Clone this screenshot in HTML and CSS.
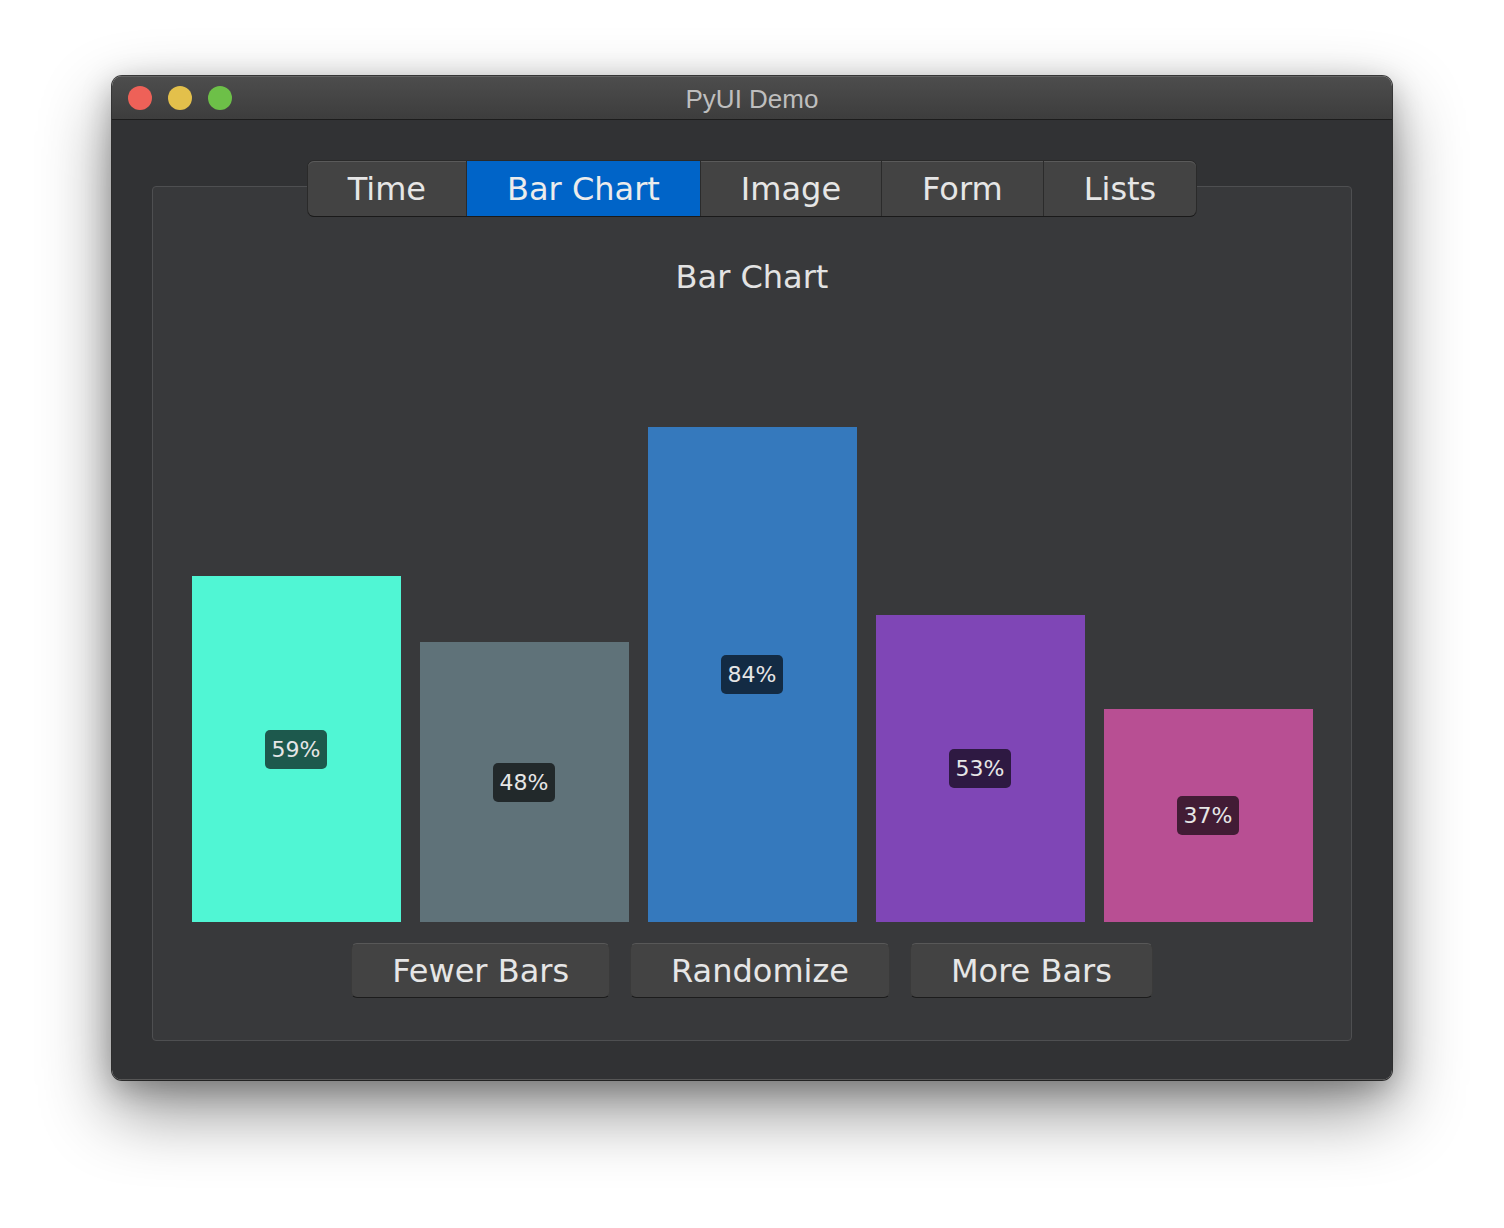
FILE: index.html
```html
<!DOCTYPE html>
<html>
<head>
<meta charset="utf-8">
<title>PyUI Demo</title>
<link rel="stylesheet" href="styles.css">
</head>
<body>
<div class="window">
  <div class="titlebar">
    <div class="lights">
      <span class="light red"></span>
      <span class="light yellow"></span>
      <span class="light green"></span>
    </div>
    <div class="title">PyUI Demo</div>
  </div>
  <div class="content">
    <div class="tabbar">
      <div class="tab">Time</div>
      <div class="tab active">Bar Chart</div>
      <div class="tab">Image</div>
      <div class="tab">Form</div>
      <div class="tab">Lists</div>
    </div>
    <div class="panel">
      <div class="heading">Bar Chart</div>
      <div class="chart">
        <div class="bar b1" style="height:346px"><span class="label">59%</span></div>
        <div class="bar b2" style="height:280px"><span class="label">48%</span></div>
        <div class="bar b3" style="height:495px"><span class="label">84%</span></div>
        <div class="bar b4" style="height:307px"><span class="label">53%</span></div>
        <div class="bar b5" style="height:213px"><span class="label">37%</span></div>
      </div>
      <div class="buttons">
        <div class="btn">Fewer Bars</div>
        <div class="btn">Randomize</div>
        <div class="btn">More Bars</div>
      </div>
    </div>
  </div>
</div>
</body>
</html>
```
FILE: styles.css
```css
html, body {
  margin: 0;
  padding: 0;
  background: #ffffff;
}
body {
  width: 1504px;
  height: 1228px;
  overflow: hidden;
}
.window {
  margin: 76px 0 0 112px;
  width: 1280px;
  height: 1004px;
  border-radius: 10px;
  overflow: hidden;
  box-shadow: 0 0 0 1px rgba(0,0,0,0.75), 0 30px 70px rgba(0,0,0,0.45), 0 8px 30px rgba(0,0,0,0.25);
  display: flex;
  flex-direction: column;
}
.titlebar {
  height: 43px;
  border-bottom: 1px solid #1c1c1c;
  background: linear-gradient(#4d4d4d, #3d3d3d);
  box-shadow: inset 0 1px 0 #646464;
  position: relative;
  display: flex;
  align-items: center;
}
.lights {
  display: flex;
  gap: 16px;
  padding-left: 16px;
  padding-top: 1px;
}
.light {
  width: 24px;
  height: 24px;
  border-radius: 50%;
  display: block;
}
.red { background: #ee6158; }
.yellow { background: #e3c04b; }
.green { background: #6dc048; }
.title {
  position: absolute;
  left: 0;
  right: 0;
  top: 0;
  line-height: 46px;
  text-align: center;
  font-family: "Liberation Sans", Arial, sans-serif;
  font-size: 26px;
  color: #bebebe;
}
.content {
  flex: 1;
  background: #313234;
  padding: 41px 40px 39px;
  display: flex;
  flex-direction: column;
  box-shadow: inset 0 -1px 0 #565656;
  font-family: "DejaVu Sans", sans-serif;
}
.tabbar {
  align-self: center;
  display: flex;
  height: 55px;
  margin-bottom: -30px;
  position: relative;
  z-index: 1;
  border-radius: 6px;
  overflow: hidden;
  background: #434343;
  box-shadow: inset 0 1px 0 #5a5a5a, 0 1px 0 #1a1a1a, 0 0 0 1px #2a2a2a;
}
.tab {
  padding: 0 40px;
  font-size: 32px;
  line-height: 57px;
  color: #e6e6e6;
  border-left: 1px solid #2b2b2b;
}
.tab:first-child {
  border-left: none;
}
.tab.active {
  background: #0064c8;
  color: #ececec;
}
.panel {
  height: 855px;
  box-sizing: border-box;
  background: #38393b;
  border: 1px solid #4e4f51;
  border-radius: 4px;
  padding: 71px 39px 42px;
  display: flex;
  flex-direction: column;
}
.heading {
  font-size: 32px;
  line-height: 38px;
  text-align: center;
  color: #e3e3e3;
}
.chart {
  height: 626px;
  display: flex;
  justify-content: center;
  align-items: flex-end;
  gap: 19px;
}
.bar {
  flex: 0 0 209px;
  display: flex;
  align-items: center;
  justify-content: center;
}
.b1 { background: #50f6d4; }
.b2 { background: #5f7279; }
.b3 { background: #3579bd; }
.b4 { background: #7f46b6; }
.b5 { background: #b84f93; }
.label {
  font-size: 22px;
  height: 39px;
  line-height: 40px;
  padding: 0 7px;
  border-radius: 5px;
  color: #e6e6e6;
  background: rgba(0,0,0,0.64);
}
.buttons {
  margin-top: 21px;
  display: flex;
  justify-content: center;
  gap: 20px;
}
.btn {
  height: 55px;
  box-sizing: border-box;
  padding: 0 40px;
  font-size: 32px;
  line-height: 54px;
  color: #e6e6e6;
  background: #434343;
  border: 1px solid #3a3a3a;
  border-top-color: #585858;
  border-bottom-color: #1c1c1c;
  border-radius: 6px;
}
```
